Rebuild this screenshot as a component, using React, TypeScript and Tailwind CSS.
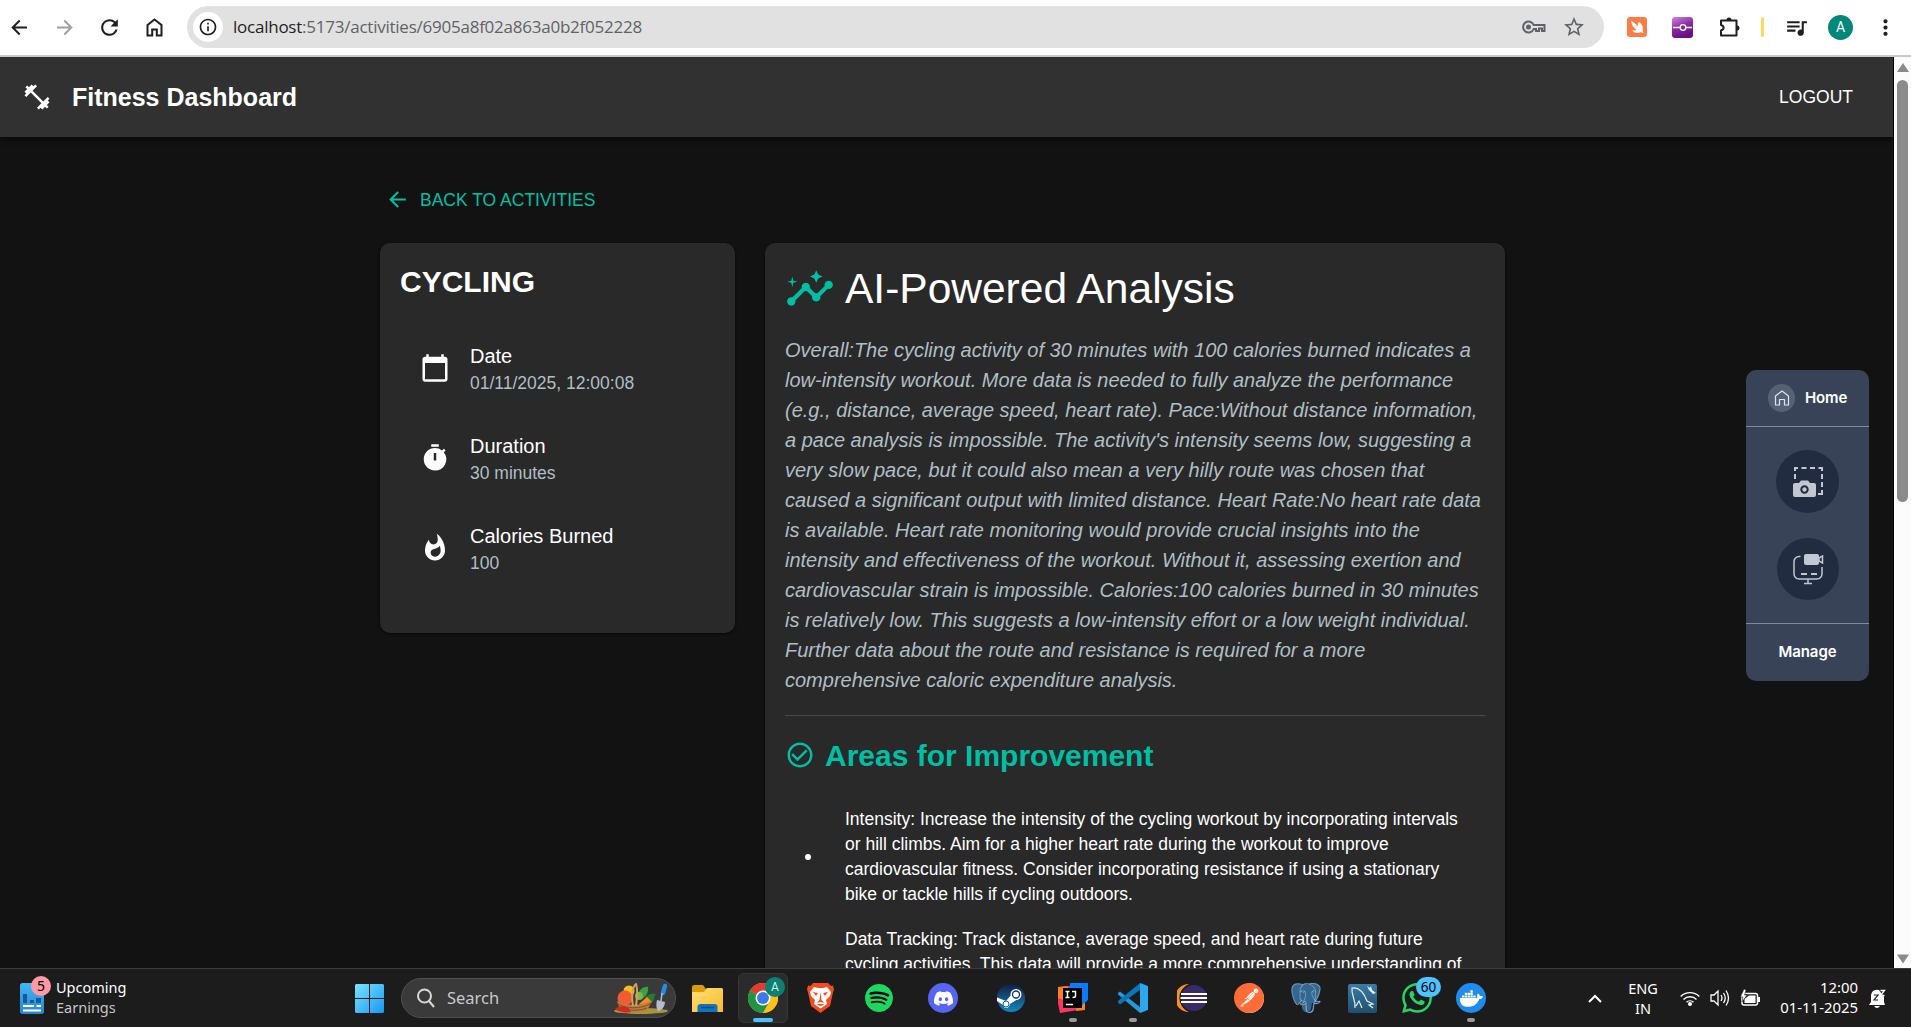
import type { ReactNode } from "react";
import {
  MdFitnessCenter, MdArrowBack, MdRefresh, MdInfoOutline, MdStarBorder,
  MdQueueMusic, MdMoreVert, MdCalendarToday, MdTimer, MdWhatshot, MdInsights, MdCheckCircleOutline,
} from "react-icons/md";
import { SiSpotify, SiDiscord, SiPostman, SiPostgresql, SiWhatsapp, SiDocker } from "react-icons/si";

const analysis = [
  "Overall:The cycling activity of 30 minutes with 100 calories burned indicates a",
  "low-intensity workout. More data is needed to fully analyze the performance",
  "(e.g., distance, average speed, heart rate). Pace:Without distance information,",
  "a pace analysis is impossible. The activity's intensity seems low, suggesting a",
  "very slow pace, but it could also mean a very hilly route was chosen that",
  "caused a significant output with limited distance. Heart Rate:No heart rate data",
  "is available. Heart rate monitoring would provide crucial insights into the",
  "intensity and effectiveness of the workout. Without it, assessing exertion and",
  "cardiovascular strain is impossible. Calories:100 calories burned in 30 minutes",
  "is relatively low. This suggests a low-intensity effort or a low weight individual.",
  "Further data about the route and resistance is required for a more",
  "comprehensive caloric expenditure analysis.",
];

const improvements = [
  [
    "Intensity: Increase the intensity of the cycling workout by incorporating intervals",
    "or hill climbs. Aim for a higher heart rate during the workout to improve",
    "cardiovascular fitness. Consider incorporating resistance if using a stationary",
    "bike or tackle hills if cycling outdoors.",
  ],
  [
    "Data Tracking: Track distance, average speed, and heart rate during future",
    "cycling activities. This data will provide a more comprehensive understanding of",
  ],
];

function BrowserBar() {
  return (
    <header className="flex h-[57px] shrink-0 items-center border-b-2 border-[#c9c9c9] bg-white pr-[15px] pb-px pl-2 text-[#1f1f1f]">
      <div className="flex w-[179px] shrink-0 items-center">
        <svg className="ml-[3px] size-[17px]" viewBox="0 0 17 17" fill="none" stroke="currentColor" strokeWidth="2"><path d="M16 8.5H2M8.7 1.5l-7 7 7 7" /></svg>
        <svg className="ml-[28px] size-[17px] text-[#a0a0a0]" viewBox="0 0 17 17" fill="none" stroke="currentColor" strokeWidth="2"><path d="M1 8.5h14M8.3 1.5l7 7-7 7" /></svg>
        <MdRefresh className="ml-[24px] size-[25px]" />
        <svg className="ml-[23px] size-[19px]" viewBox="0 0 19 19" fill="none" stroke="currentColor" strokeWidth="2"><path d="M2.500 7 9.500 1.500l7 5.500v10.500h-4.700v-6H7.200v6H2.500z" /></svg>
      </div>
      <div className="flex h-[42px] w-[1417px] shrink-0 items-center rounded-full bg-[#e1e1e1] pr-[18px] pl-[6px]">
        <div className="flex size-[30px] items-center justify-center rounded-full bg-white"><MdInfoOutline className="size-[20px]" /></div>
        <div className="ml-[10px] flex-1 font-['Open_Sans',sans-serif] text-[17px] tracking-[-0.24px] whitespace-nowrap text-[#5f6368]">
          <span className="text-[#1f1f1f]">localhost</span>:5173/activities/6905a8f02a863a0b2f052228
        </div>
        <svg className="h-[14px] w-6" viewBox="0 0 24 14" fill="none" stroke="#5f6368" strokeWidth="2"><path d="M11.700 5H22.500v6h-2.500V8.500h-3V11h-3V9h-2.300a5.500 5.500 0 1 1 0-4z" /><circle cx="6.500" cy="7" r="2.500" fill="#5f6368" stroke="none" /></svg>
        <MdStarBorder className="ml-[16px] size-[24px] text-[#5f6368]" />
      </div>
      <div className="ml-[23px] flex shrink-0 items-center">
        <svg className="size-5" viewBox="0 0 20 20"><rect width="20" height="20" rx="3" fill="#fc7c47" /><path fill="#fff" d="M4 4c3 1 5.500 3.500 7 6C10.500 7.500 11 6 12 5c3 2 4.500 5 3.500 8.500l1 2.500-3-.8c-3 1.600-6.500.6-8.500-2 2 .5 3.500.3 4.500-.4C7 11 4.500 8 4 4z" /></svg>
        <svg className="ml-[25px] size-[21px]" viewBox="0 0 21 21"><defs><linearGradient id="ext" x1="0" y1="0" x2=".4" y2="1"><stop stopColor="#d184dc" /><stop offset=".55" stopColor="#8a2aa5" /><stop offset="1" stopColor="#6a0f87" /></linearGradient></defs><rect width="21" height="21" rx="3" fill="url(#ext)" /><path d="M1 10.500h7M14 10.500h6" stroke="#fff" strokeWidth="1.300" /><circle cx="11" cy="10.500" r="2.800" fill="none" stroke="#fff" strokeWidth="1.300" /></svg>
        <svg className="ml-[26px] size-[22px]" viewBox="0 0 22 22" fill="none" stroke="#1f1f1f" strokeWidth="2"><path d="M2 4.500h15.500v15H2v-5c3.500-1 3.500-4.500 0-5.500z" strokeLinejoin="round" /><path d="M7.500 4a2.500 2.500 0 0 1 5 0zM18 9.500a2.500 2.500 0 0 1 0 5z" fill="#1f1f1f" stroke="none" /></svg>
        <div className="ml-[20px] h-5 w-[3px] rounded-full bg-[#fddc5c]" />
        <MdQueueMusic className="ml-[20px] size-[25px]" />
        <div className="ml-[19px] flex size-[25px] items-center justify-center rounded-full bg-[#00897b] font-['Roboto',sans-serif] text-[14px] text-white">A</div>
        <MdMoreVert className="ml-[20px] size-[25px]" />
      </div>
    </header>
  );
}

function Stat({ icon, label, value }: { icon: ReactNode; label: string; value: string }) {
  return (
    <li className="flex h-[90px] items-center gap-5 pl-5">
      {icon}
      <div className="whitespace-nowrap">
        <div className="text-[20px] leading-[30px]">{label}</div>
        <div className="text-[17.5px] leading-[25px] text-[#b0bec5]">{value}</div>
      </div>
    </li>
  );
}

function CaptureWidget() {
  return (
    <aside className="absolute top-[313px] right-[42px] flex h-[311px] w-[123px] flex-col rounded-[10px] bg-[#384357] font-['Inter',sans-serif] text-[15px] font-semibold tracking-[-0.1px] text-white">
      <div className="flex h-[57px] items-center border-b border-[#7d8ba1] pl-[22px]">
        <span className="flex h-7 w-[27px] items-center justify-center rounded-full bg-[#566176]">
          <svg className="size-4" viewBox="0 0 16 16" fill="none" stroke="#dfe3ea" strokeWidth="1.200"><path d="M1.500 6 8 1l6.500 5v9H10.500V9.500h-5V15h-4z" strokeLinejoin="round" /></svg>
        </span>
        <span className="ml-[10px]">Home</span>
      </div>
      <div className="flex flex-1 flex-col items-center gap-[25px] pt-[23px]">
        <div className="flex size-[63px] items-center justify-center rounded-full bg-[#212c40]">
          <svg className="size-8" viewBox="0 0 32 32" fill="none" stroke="#c3c7cf" strokeWidth="2"><path d="M3 5V2h3M9.500 2h5M18 2h5M26.500 2H30v3M30 8v5M30 16v5M30 24v4h-4M3 8v5" /><path d="M3 17h4l2-2.500h7L18 17h4a2 2 0 0 1 2 2v10a2 2 0 0 1-2 2H3a2 2 0 0 1-2-2V19a2 2 0 0 1 2-2z" fill="#c3c7cf" stroke="none" /><circle cx="12.500" cy="23.500" r="3.200" stroke="#212c40" /></svg>
        </div>
        <div className="flex size-[62px] items-center justify-center rounded-full bg-[#212c40]">
          <svg className="size-8" viewBox="0 0 32 32" fill="none" stroke="#c3c7cf" strokeWidth="1.500"><path d="M8.500 3.500H7a5 5 0 0 0-5 5v12.500a5 5 0 0 0 5 5h18a5 5 0 0 0 5-5V14M16 26v4M12 30.500h8" /><path d="M9 21h6M19 21h6" strokeWidth="2.200" /><rect x="12" y="1" width="15" height="11" rx="2" fill="#c3c7cf" stroke="none" /><path d="m27 5 3.500-2v7L27 8z" /></svg>
        </div>
      </div>
      <div className="flex h-[58px] items-center justify-center border-t border-[#7d8ba1]">Manage</div>
    </aside>
  );
}

function Page() {
  return (
    <div className="relative flex min-h-0 flex-1">
      <main className="flex min-w-0 flex-1 flex-col overflow-hidden bg-[#121212] font-['Liberation_Sans',Arial,sans-serif] text-white">
        <div className="z-10 flex h-20 shrink-0 items-center bg-[#313131] pr-10 pl-[22px] shadow-[0_3px_5px_rgba(0,0,0,0.5)]">
          <MdFitnessCenter className="size-[30px]" />
          <h1 className="mt-[2px] ml-5 text-[25px] font-bold">Fitness Dashboard</h1>
          <span className="ml-auto text-[17.500px]">LOGOUT</span>
        </div>
        <div className="ml-[380px] w-[1125px]">
          <div className="mt-[47px] flex h-[31px] items-center pl-[5px] text-[#00bfa5]">
            <MdArrowBack className="size-[25px]" />
            <span className="mt-px ml-[10px] text-[17.5px]">BACK TO ACTIVITIES</span>
          </div>
          <div className="mt-[28px] flex items-start gap-[30px]">
            <section className="h-[390px] w-[355px] rounded-[10px] bg-[#292929] px-5 pt-[19px] shadow-[0_1px_3px_rgba(0,0,0,0.7)]">
              <h2 className="text-[30px] leading-10 font-bold">CYCLING</h2>
              <ul className="mt-[21px]">
                <Stat icon={<MdCalendarToday className="size-[30px]" />} label="Date" value="01/11/2025, 12:00:08" />
                <Stat icon={<MdTimer className="size-[30px]" />} label="Duration" value="30 minutes" />
                <Stat icon={<MdWhatshot className="size-[30px]" />} label="Calories Burned" value="100" />
              </ul>
            </section>
            <section className="w-[740px] rounded-[10px] bg-[#292929] p-5 shadow-[0_1px_3px_rgba(0,0,0,0.7)]">
              <h2 className="flex h-[52px] items-center text-[42.5px] leading-[52px] whitespace-nowrap">
                <MdInsights className="mr-[10px] size-[50px] text-[#00bfa5]" />AI-Powered Analysis
              </h2>
              <p className="mt-5 text-[20px] leading-[30px] whitespace-nowrap text-[#b0bec5] italic">
                {analysis.map((line) => <span key={line} className="block">{line}</span>)}
              </p>
              <hr className="mt-5 border-[#4a4a4a]" />
              <h3 className="mt-[19px] flex h-10 items-center text-[30px] font-bold whitespace-nowrap text-[#00bfa5]">
                <MdCheckCircleOutline className="mr-[10px] size-[30px]" />Areas for Improvement
              </h3>
              <ul className="mt-[22px]">
                {improvements.map((item, i) => (
                  <li key={item[0]} className="flex items-center py-[10px]">
                    {i === 0 && <span className="mr-[34px] ml-[20px] size-[6px] rounded-full bg-white" />}
                    {i > 0 && <span className="w-[60px]" />}
                    <p className="text-[17.5px] leading-[25px] whitespace-nowrap">
                      {item.map((line) => <span key={line} className="block">{line}</span>)}
                    </p>
                  </li>
                ))}
              </ul>
            </section>
          </div>
        </div>
      </main>
      <CaptureWidget />
      <div className="flex w-[18px] shrink-0 flex-col items-center justify-between border-l border-black bg-[#fcfcfc] pt-[6px] pb-[4px]">
        <div className="flex flex-col items-center gap-2">
          <svg className="h-[9px] w-3" viewBox="0 0 12 9"><path d="M6 0l6 9H0z" fill="#8b8b8b" /></svg>
          <div className="h-[422px] w-[11px] rounded-full bg-[#8b8b8b]" />
        </div>
        <svg className="h-[10px] w-3" viewBox="0 0 12 9"><path d="M6 9l6-9H0z" fill="#8b8b8b" /></svg>
      </div>
    </div>
  );
}

function Chrome() {
  return (
    <svg className="size-[30px]" viewBox="0 0 48 48">
      <circle cx="24" cy="24" r="24" fill="#fbc116" />
      <path d="M24 24 3.200 12A24 24 0 0 1 44.800 12z" fill="#e33b2e" />
      <path d="M24 24 3.200 12A24 24 0 0 0 24 48l10.400-18z" fill="#229342" />
      <path d="M24 12h20.800A24 24 0 0 1 24 48l10.400-18z" fill="#fbc116" />
      <circle cx="24" cy="24" r="12" fill="#fff" /><circle cx="24" cy="24" r="9.500" fill="#3a7be8" />
    </svg>
  );
}

function TaskIcon({ children, className = "", running = false }: { children: ReactNode; className?: string; running?: boolean }) {
  return (
    <div className={`relative flex h-8 w-8 shrink-0 items-center justify-center ${className}`}>
      {children}
      {running && <span className="absolute -bottom-2 left-3 h-1 w-2 rounded-full bg-[#9a9a9a]" />}
    </div>
  );
}

function Taskbar() {
  return (
    <footer className="flex h-[59px] shrink-0 items-center border-t border-[#3c3c3c] bg-[#1c1c1c] font-['Noto_Sans','Open_Sans',sans-serif] text-[15px] text-white">
      <div className="relative ml-5 shrink-0">
        <svg className="h-[31px] w-6" viewBox="0 0 24 31"><defs><linearGradient id="news" x1="0" y1="0" x2="0" y2="1"><stop stopColor="#3fbaf2" /><stop offset="1" stopColor="#2a83cf" /></linearGradient></defs><rect width="24" height="31" rx="2.500" fill="url(#news)" /><path d="M3 11h4v9H3zM10 17h4v3h-4zM16 15h5v5h-5z" fill="#12599e" /><path d="M3 23h11M16.500 23H21M3 27.500h18" stroke="#fff" strokeWidth="2" /></svg>
        <span className="absolute -top-[7px] left-[11px] flex size-5 items-center justify-center rounded-full bg-[#ff99a4] text-[14px] text-black">5</span>
      </div>
      <div className="-mt-[2px] ml-3 w-[299px] shrink-0 text-[14.500px] leading-5"><div>Upcoming</div><div className="text-[#c5c5c5]">Earnings</div></div>
      <svg className="size-[29px] shrink-0" viewBox="0 0 29 29"><defs><linearGradient id="win" x1="0" y1="0" x2="1" y2="1"><stop stopColor="#7be4fb" /><stop offset="1" stopColor="#1598f5" /></linearGradient></defs><path fill="url(#win)" d="M1 0h13v14H0V1zM15 0h13l1 1v13H15zM0 15h14v14H1l-1-1zM15 15h14v13l-1 1H15z" /></svg>
      <div className="ml-[17px] flex h-10 w-[275px] shrink-0 items-center rounded-full border border-[#505050] bg-[#3a3a3a] pr-[7px] pl-[14px]">
        <svg className="h-5 w-[19px]" viewBox="0 0 19 20" fill="none" stroke="#d8d8d8" strokeWidth="2"><circle cx="8.500" cy="8" r="6.500" /><path d="m13 13 5 6" /></svg>
        <span className="ml-[12px] text-[16.500px] text-[#c8c8c8]">Search</span>
        <svg className="ml-auto h-[31px] w-[57px]" viewBox="0 0 57 31">
          <ellipse cx="30" cy="28" rx="27" ry="3" fill="#a5963c" />
          <path d="M27 13c0-5 5-10 10-9 1 6-3 11-8 13z" fill="#39a343" />
          <path d="M34 15c2-4 7-5 11-4-3 3-1 7-5 9z" fill="#237b35" />
          <circle cx="18" cy="8" r="5.500" fill="#f6bd22" /><circle cx="14" cy="15" r="7.500" fill="#f25c32" />
          <circle cx="28" cy="13" r="4" fill="#7fb93c" /><path d="m36 14-8 7 5 3 8-5z" fill="#f58d22" />
          <path d="M6 18c10 5 24 5 34 0-1 7-5 10-8 11H15C10 28 7 23 6 18z" fill="#bd7a42" />
          <path d="M7 21c9 5 23 5 32 0M10 25c8 3 18 3 26 0" stroke="#875127" fill="none" />
          <path d="M22 23C20 12 22 3 25 1c2 5 1 15 0 22" stroke="#d89e60" strokeWidth="2" fill="none" />
          <path d="M4 26c4-4 9-3 14-1l2 4c-6 1-12 0-16-3z" fill="#d4281f" />
          <path d="m54 3-2 7" stroke="#2290e2" strokeWidth="4.500" strokeLinecap="round" /><path d="m51 10-1 8" stroke="#b4bdc6" strokeWidth="1.500" /><path d="m46 17 8 2c0 5-4 9-7 9-2-3-2-7-1-11z" fill="#b4bdc6" />
        </svg>
      </div>
      <div className="ml-[15px] flex shrink-0 items-center">
        <TaskIcon>
          <svg className="h-[27px] w-[31px]" viewBox="0 0 31 27"><defs><linearGradient id="folder" x1="0" y1="0" x2="1" y2="1"><stop stopColor="#ffe07a" /><stop offset="1" stopColor="#f8bb26" /></linearGradient></defs><path d="M0 2c0-1 1-2 2-2h9l3 4h4v6H0z" fill="#dc9a0c" /><path d="M0 7h12l3-4h15l1 1v23H0z" fill="url(#folder)" /><path d="M5.500 27v-5a3 3 0 0 1 3-3h14a3 3 0 0 1 3 3v5z" fill="#1273bd" /><path d="M9 22.500h13" stroke="#0c4b87" strokeWidth="1.500" /></svg>
        </TaskIcon>
        <div className="relative ml-[15px] flex h-[50px] w-[50px] items-center justify-center rounded-md border border-[#363636] bg-[#2b2b2b]">
          <Chrome />
          <span className="absolute top-[3px] right-[2px] flex size-5 items-center justify-center rounded-full bg-[#0b8073] font-['Roboto',sans-serif] text-[12px] text-[#cfeee9]">A</span>
          <span className="absolute bottom-0 left-[14px] h-1 w-5 rounded-full bg-[#4cc2ff]" />
        </div>
        <TaskIcon className="ml-4"><svg className="h-[30px] w-[27px]" viewBox="0 0 27 30"><path d="m6 0h15l3 3 2-.5 1 4-1 3-3 13.500L13.500 30 4 23 1 9.500 0 6.500l1-4L3.500 3z" fill="#f84a1c" /><path d="m7 4 4 1h5l4-1 4 5-1 4-4 4 1 4-6.500 4.500L7 21l1-4-4-4-1-4z" fill="#fff" /><path d="m6 9 5 1-2 3zM21 9l-5 1 2 3zM13.500 9l-1 8-3 3 4-1 4 1-3-3zM9 21l4.500 2L18 21" fill="#f84a1c" /></svg></TaskIcon>
        <TaskIcon className="ml-[27px]"><span className="flex size-7 items-center justify-center rounded-full bg-black"><SiSpotify className="size-7 text-[#1ed760]" /></span></TaskIcon>
        <TaskIcon className="ml-[32px]"><span className="flex size-[30px] items-center justify-center rounded-full bg-[#5865f2]"><SiDiscord className="size-[19px]" /></span></TaskIcon>
        <TaskIcon className="ml-[36px]"><svg className="size-7" viewBox="0 0 28 28"><defs><linearGradient id="steam" x1="0" y1="0" x2="0" y2="1"><stop stopColor="#121e42" /><stop offset="1" stopColor="#1488be" /></linearGradient></defs><circle cx="14" cy="14" r="14" fill="url(#steam)" /><path d="M0 13.500 9 17l6-7 6 5-8 5c-1 5-6 5-7 1L0 17z" fill="#fff" /><circle cx="19" cy="10.500" r="5.500" fill="#fff" /><circle cx="19" cy="10.500" r="3.500" fill="#fff" stroke="#16335d" strokeWidth="1.300" /><circle cx="9" cy="20" r="3" fill="none" stroke="#176395" /></svg></TaskIcon>
        <TaskIcon className="ml-[30px]" running>
          <svg className="size-[30px]" viewBox="0 0 30 30"><path d="M0 4 12 3l8 24-18 3-2-10z" fill="#ff3460" /><path d="M0 4 10 3 6 17 0 15z" fill="#fc801d" /><path d="M20 14h7v13l-9 1z" fill="#fc801d" /><path d="M12 0h18v17l-7 6-12-10z" fill="#087cfa" /><rect x="5" y="5" width="19" height="20" /><path d="M7.500 8.500h4M9.500 8.500v6M7.500 14.500h4M14 8.500h3.500V13q0 1.500-3 1.500M8 21.500h7" stroke="#fff" strokeWidth="1.500" fill="none" /></svg>
        </TaskIcon>
        <TaskIcon className="ml-[28px]" running>
          <svg className="size-[30px]" viewBox="0 0 30 30"><path d="m0 10 2-1.500L22 24v6L0 11.500z" fill="#219bdb" /><path d="m0 19.500 2 2L22 7V0L0 18z" fill="#0876b9" /><path d="m22 0 8 3v24l-8 3z" fill="#2aa7ed" /></svg>
        </TaskIcon>
        <TaskIcon className="ml-[27px]"><svg className="h-7 w-[30px]" viewBox="0 0 30 28"><path d="M12 0A14 14 0 0 0 12 28a15 15 0 0 1 0-28z" fill="#f7941e" /><circle cx="17" cy="14" r="13" fill="#372b68" /><path d="M4 10h26M3.500 14H30M4 18h26" stroke="#fff" strokeWidth="2" /></svg></TaskIcon>
        <TaskIcon className="ml-[25px]"><span className="flex size-[29px] items-center justify-center rounded-full bg-white"><SiPostman className="size-[30px] shrink-0 text-[#ff6c37]" /></span></TaskIcon>
        <TaskIcon className="ml-[25px]">
          <svg className="absolute size-[30px]" viewBox="0 0 30 30"><path d="M9 1C4 0 0 3 1 9c1 5 3 11 5 11 2 1 3-1 5-2v7c1 5 7 6 9 1l1-6 7-1-3-2c3-4 5-10 3-13-3-4-8-4-11-2-3-1-6-1-8-1z" fill="#336791" /></svg>
          <SiPostgresql className="relative size-[30px] text-[#c9d8e4]" stroke="#336791" strokeWidth=".5" />
        </TaskIcon>
        <TaskIcon className="ml-[24px]"><svg className="size-[29px]" viewBox="0 0 29 29"><defs><linearGradient id="sql" x1="0" y1="0" x2="0" y2="1"><stop stopColor="#3a7ca5" /><stop offset="1" stopColor="#214e6d" /></linearGradient></defs><rect width="29" height="29" rx="2" fill="url(#sql)" /><path d="M7 24C8 15 3 12 4 4c7-1 12 5 15 13l6 3-4 1 4 3M8 22l3-5 3 7" stroke="#e2edf3" strokeWidth="1.200" fill="none" /><path d="m19 2 3 2 1-2 1 4 4 3-3 1-4-4z" fill="#e2edf3" /></svg></TaskIcon>
        <TaskIcon className="ml-[23px]">
          <SiWhatsapp className="size-[30px] text-[#25d366]" />
          <span className="absolute -top-[5px] left-[15px] flex h-5 w-[25px] items-center justify-center rounded-full bg-[#4cc2ff] text-[13.500px] text-black">60</span>
        </TaskIcon>
        <TaskIcon className="ml-[22px]" running><span className="flex size-[30px] items-center justify-center rounded-full bg-[#1d8cec]"><SiDocker className="size-[23px]" /></span></TaskIcon>
      </div>
      <div className="ml-auto flex shrink-0 items-center pr-[25px]">
        <svg className="h-[9px] w-[14px]" viewBox="0 0 14 9" fill="none" stroke="#fff" strokeWidth="2"><path d="m1 8 6-6 6 6" /></svg>
        <div className="ml-[22px] w-[38px] text-center text-[14.500px] leading-5"><div>ENG</div><div>IN</div></div>
        <svg className="ml-[18px] h-[15px] w-5" viewBox="0 0 20 15" fill="none" stroke="#fff" strokeWidth="1.400"><path d="M.7 5.500a13 13 0 0 1 18.600 0M3.500 8.500a9.200 9.200 0 0 1 13 0M6.500 11.300a5 5 0 0 1 7 0" /><circle cx="10" cy="13" r="1.300" fill="#fff" /></svg>
        <svg className="ml-[10px] h-[18px] w-5" viewBox="0 0 20 18" fill="none" stroke="#fff" strokeWidth="1.300"><path d="M1 6h3l4-4v14l-4-4H1z" /><path d="M11 6q2 3 0 6M13.500 4q3.500 5 0 10M16 1.500q5 7.500 0 15" /></svg>
        <svg className="ml-[10px] h-[18px] w-5" viewBox="0 0 20 18"><rect x="2" y="4.500" width="15.500" height="11.500" rx="2" fill="none" stroke="#fff" strokeWidth="1.500" /><path d="M4.500 10 9 6.500h6.500V14h-11zM18 8h2v5h-2z" fill="#fff" /><path d="M4 0 .500 8H3L2 13l5-7H4.500L6 1z" fill="#fff" stroke="#1c1c1c" strokeWidth=".5" /></svg>
        <div className="-mt-[2px] ml-[10px] w-[88px] text-right text-[14.900px] leading-5 whitespace-nowrap"><div>12:00</div><div>01-11-2025</div></div>
        <svg className="ml-[11px] h-[19px] w-[17px]" viewBox="0 0 17 19"><path d="M2 13V7a6 6 0 0 1 8-6l5 7v5l1 3H0zM5 17h6q-3 4-6 0z" fill="#fff" /><path d="M5 6h4l-4 5h4" stroke="#1c1c1c" strokeWidth="1.200" fill="none" /><path d="M11.500 1.500h4l-4 5h4" stroke="#fff" strokeWidth="1.300" fill="none" /></svg>
      </div>
    </footer>
  );
}

export default function App() {
  return (
    <div className="flex h-[1027px] w-[1911px] flex-col overflow-hidden">
      <BrowserBar />
      <Page />
      <Taskbar />
    </div>
  );
}
